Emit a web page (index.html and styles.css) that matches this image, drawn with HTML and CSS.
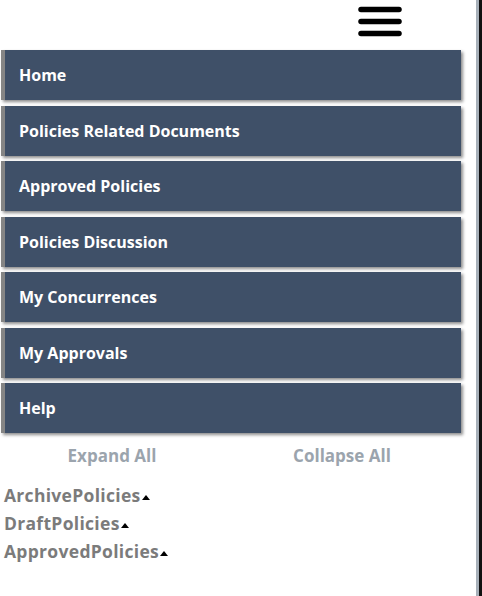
FILE: index.html
```html
<!DOCTYPE html>
<html>
<head>
<meta charset="utf-8">
<link rel="stylesheet" href="styles.css">
</head>
<body>
<div class="frame">
  <div class="page">
    <header class="top">
      <svg class="burger" width="44" height="40" viewBox="0 0 44 40">
        <line x1="3" y1="9.5" x2="41" y2="9.5" stroke="#000" stroke-width="5.5" stroke-linecap="round"/>
        <line x1="3" y1="21.5" x2="41" y2="21.5" stroke="#000" stroke-width="5.5" stroke-linecap="round"/>
        <line x1="3" y1="33.5" x2="41" y2="33.5" stroke="#000" stroke-width="5.5" stroke-linecap="round"/>
      </svg>
    </header>
    <nav class="menu">
      <a class="item">Home</a>
      <a class="item">Policies Related Documents</a>
      <a class="item">Approved Policies</a>
      <a class="item">Policies Discussion</a>
      <a class="item">My Concurrences</a>
      <a class="item">My Approvals</a>
      <a class="item">Help</a>
    </nav>
    <div class="toggles">
      <span class="toggle">Expand All</span>
      <span class="toggle">Collapse All</span>
    </div>
    <ul class="tree">
      <li>ArchivePolicies<span class="arrow"></span></li>
      <li>DraftPolicies<span class="arrow"></span></li>
      <li>ApprovedPolicies<span class="arrow"></span></li>
    </ul>
  </div>
</div>
</body>
</html>
```
FILE: styles.css
```css
html, body {
  margin: 0;
  padding: 0;
  height: 100%;
  background: #fff;
}
body {
  font-family: "Open Sans", "DejaVu Sans", sans-serif;
  font-weight: bold;
  border-right: 3px solid #111;
  box-sizing: border-box;
  width: 482px;
}
.frame {
  height: 100%;
  width: 476px;
  border-right: 3px solid #a7b0b9;
}
.page {
  padding-left: 1px;
}
.top {
  height: 50px;
  display: flex;
  justify-content: flex-end;
  padding-right: 74px;
}
.burger {
  overflow: visible;
  display: block;
}
.menu {
  display: flex;
  flex-direction: column;
  gap: 5.5px;
  width: 460px;
}
.item {
  display: flex;
  align-items: center;
  height: 50px;
  box-sizing: border-box;
  background: #3f5068;
  border-left: 4px solid #858585;
  padding-left: 14px;
  color: #fff;
  font-size: 16px;
  box-shadow: 2px 2px 3px rgba(0,0,0,0.45);
}
.toggles {
  display: flex;
  width: 460px;
  margin-top: 11px;
}
.toggle {
  flex: 1;
  text-align: center;
  padding-right: 8px;
  color: #9ba4ad;
  font-size: 17px;
}
.tree {
  list-style: none;
  margin: 14px 0 0 3px;
  padding: 0;
}
.tree li {
  color: #7b7b7b;
  font-size: 17.5px;
  letter-spacing: 0.3px;
  line-height: 28px;
}
.arrow {
  display: inline-block;
  width: 0;
  height: 0;
  border-left: 4.5px solid transparent;
  border-right: 4.5px solid transparent;
  border-bottom: 5px solid #000;
  margin-left: 1px;
  vertical-align: 2px;
}
```
